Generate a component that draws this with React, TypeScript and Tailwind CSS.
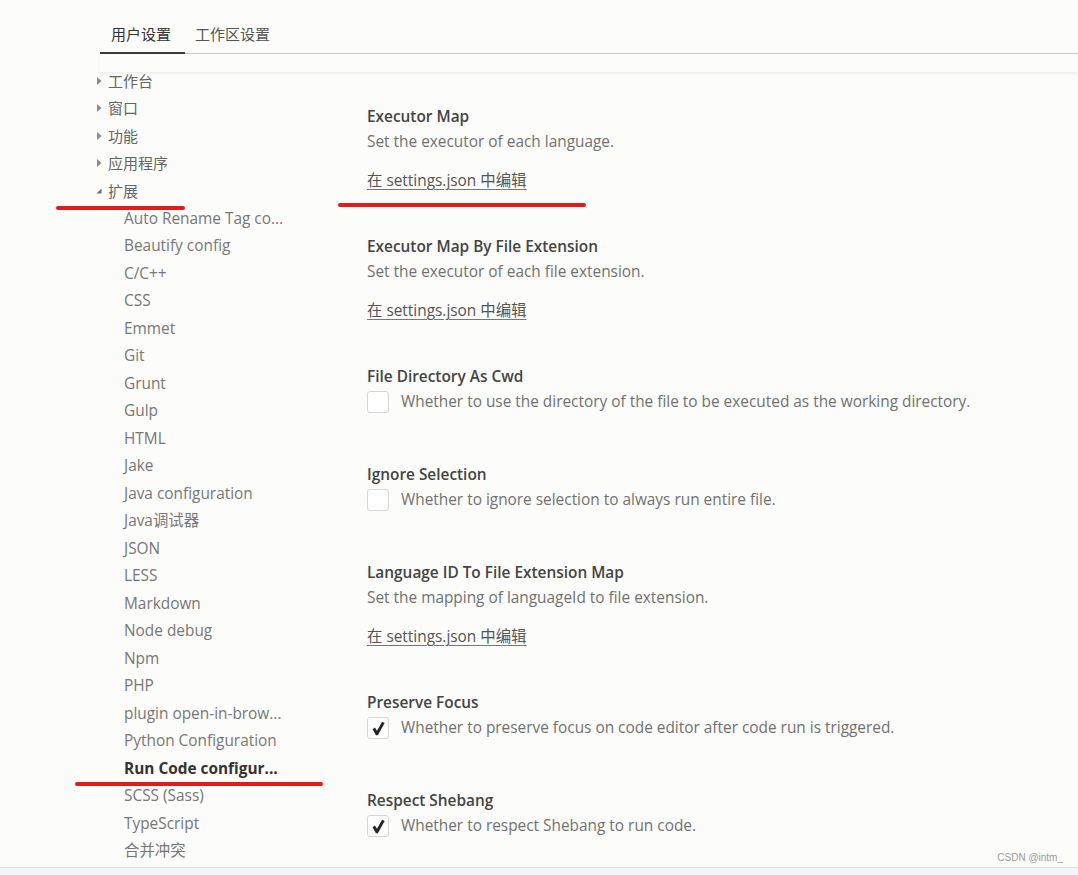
import React from "react";

const FONT = "font-['Open_Sans','Noto_Sans_CJK_SC',sans-serif]";

const TOP_GROUPS = [
  { label: "工作台", open: false },
  { label: "窗口", open: false },
  { label: "功能", open: false },
  { label: "应用程序", open: false },
  { label: "扩展", open: true },
];

const EXTENSIONS = [
  "Auto Rename Tag co...",
  "Beautify config",
  "C/C++",
  "CSS",
  "Emmet",
  "Git",
  "Grunt",
  "Gulp",
  "HTML",
  "Jake",
  "Java configuration",
  "Java调试器",
  "JSON",
  "LESS",
  "Markdown",
  "Node debug",
  "Npm",
  "PHP",
  "plugin open-in-brow...",
  "Python Configuration",
  "Run Code configur...",
  "SCSS (Sass)",
  "TypeScript",
  "合并冲突",
];

type Setting =
  | { kind: "link"; title: string; desc: string }
  | { kind: "check"; title: string; desc: string; checked: boolean };

const SETTINGS: Setting[] = [
  { kind: "link", title: "Executor Map", desc: "Set the executor of each language." },
  { kind: "link", title: "Executor Map By File Extension", desc: "Set the executor of each file extension." },
  {
    kind: "check",
    title: "File Directory As Cwd",
    desc: "Whether to use the directory of the file to be executed as the working directory.",
    checked: false,
  },
  { kind: "check", title: "Ignore Selection", desc: "Whether to ignore selection to always run entire file.", checked: false },
  { kind: "link", title: "Language ID To File Extension Map", desc: "Set the mapping of languageId to file extension." },
  {
    kind: "check",
    title: "Preserve Focus",
    desc: "Whether to preserve focus on code editor after code run is triggered.",
    checked: true,
  },
  { kind: "check", title: "Respect Shebang", desc: "Whether to respect Shebang to run code.", checked: true },
];

function Twisty({ open }: { open: boolean }) {
  return open ? (
    <svg width="8" height="8" viewBox="0 0 8 8" className="mr-[5px]">
      <path d="M6.5 1.5 L6.5 6.5 L1.5 6.5 Z" fill="#6f6f6f" />
    </svg>
  ) : (
    <svg width="8" height="10" viewBox="0 0 8 10" className="mr-[5px]">
      <path d="M2 1 L6.5 5 L2 9 Z" fill="#8a8a8a" />
    </svg>
  );
}

function Checkbox({ checked }: { checked: boolean }) {
  return (
    <div className="w-[22px] h-[22px] flex-none rounded-[3px] border border-[#d6d6d6] bg-white flex items-center justify-center">
      {checked && (
        <svg width="17" height="17" viewBox="0 0 16 16">
          <path d="M2.4 8.8 L4.6 7.0 L6.6 10.0 L11.4 1.6 L13.8 2.8 L7.4 14.4 L5.6 14.4 Z" fill="#262626" />
        </svg>
      )}
    </div>
  );
}

export default function App() {
  return (
    <div className={`relative w-[1078px] h-[875px] overflow-hidden bg-[#fcfcfa] flex flex-col ${FONT}`}>
      {/* Tabs */}
      <div className="ml-[100px] h-[54px] flex items-start border-b border-[#c9c9c9] flex-none text-[15px]">
        <div className="w-[85px] h-[54px] pl-[11px] pt-[23px] leading-[22px] border-b-2 border-[#3a3a3a] -mb-px text-[#333]">
          用户设置
        </div>
        <div className="h-[54px] pl-[10px] pt-[23px] leading-[22px] text-[#555]">工作区设置</div>
      </div>
      <div className="relative z-10 ml-[100px] h-[18px] flex-none shadow-[0_2px_3px_rgba(0,0,0,0.06)] bg-[#fcfcfa]" />

      {/* Body */}
      <div className="flex flex-1 min-h-0">
        {/* Tree */}
        <div className="w-[340px] flex-none -mt-[5px] text-[15.4px]">
          {TOP_GROUPS.map((g) => (
            <div key={g.label} className="h-[27.5px] flex items-center pl-[95px] text-[#666] text-[15px]">
              <Twisty open={g.open} />
              <span>{g.label}</span>
            </div>
          ))}
          {EXTENSIONS.map((e) => {
            const active = e === "Run Code configur...";
            return (
              <div
                key={e}
                className={`h-[27.5px] flex items-center pl-[124px] ${active ? "font-bold text-[#333]" : "text-[#777]"}`}
              >
                {e}
              </div>
            );
          })}
        </div>

        {/* Settings */}
        <div className="flex-1 pl-[27px] pt-[35px] text-[15.4px]">
          {SETTINGS.map((s) => (
            <div key={s.title} className={s.kind === "link" ? "h-[130px]" : "h-[98px]"}>
              <div className="leading-[20px] font-semibold text-[#444]">{s.title}</div>
              {s.kind === "link" ? (
                <>
                  <div className="mt-[5px] leading-[20px] text-[#717171]">{s.desc}</div>
                  <div className="mt-[19px] leading-[20px] text-[#555] underline underline-offset-[3px] decoration-[#777]">
                    在 settings.json 中编辑
                  </div>
                </>
              ) : (
                <div className="mt-[4px] flex items-center gap-[12px]">
                  <Checkbox checked={s.checked} />
                  <span className="leading-[20px] text-[#717171]">{s.desc}</span>
                </div>
              )}
            </div>
          ))}
        </div>
      </div>

      {/* Bottom strip */}
      <div className="h-[8px] flex-none border-t border-[#dde1e6] bg-[#f3f5f8]" />

      {/* Watermark */}
      <div className="absolute right-[15px] bottom-[10px] text-[10px] text-[#9a9a9a] font-['Liberation_Sans',sans-serif]">
        CSDN @intm_
      </div>

      {/* Hand-drawn red annotations */}
      <div className="absolute left-[56px] top-[206px] w-[129px] h-[4px] rounded-full bg-[#e31b1b]" />
      <div className="absolute left-[338px] top-[203px] w-[248px] h-[4px] rounded-full bg-[#e31b1b]" />
      <div className="absolute left-[75px] top-[782px] w-[248px] h-[4px] rounded-full bg-[#e31b1b]" />
    </div>
  );
}
